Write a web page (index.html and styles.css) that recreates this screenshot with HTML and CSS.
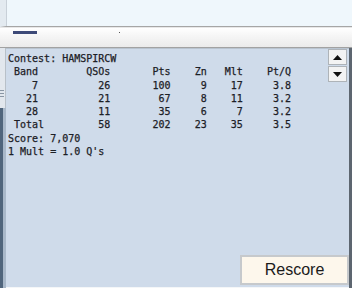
FILE: index.html
```html
<!DOCTYPE html>
<html>
<head>
<meta charset="utf-8">
<link rel="stylesheet" href="styles.css">
</head>
<body>
<div class="top"></div>
<div class="toolbar">
  <span class="sel"></span>
  <span class="dot"></span>
</div>
<div class="main">
  <div class="left-strip">
    <div class="grip-area"><span class="grip"></span></div>
    <div class="dark-edge"></div>
  </div>
  <div class="panel">
    <div class="row">
      <pre class="score">Contest: HAMSPIRCW
 Band        QSOs       Pts    Zn   Mlt    Pt/Q
    7          26       100     9    17     3.8
   21          21        67     8    11     3.2
   28          11        35     6     7     3.2
 Total         58       202    23    35     3.5
Score: 7,070
1 Mult = 1.0 Q's</pre>
      <div class="scroller">
        <div class="sbtn"><svg width="9" height="5" viewBox="0 0 9 5"><polygon points="0,5 9,5 4.5,0" fill="#111"/></svg></div>
        <div class="sbtn"><svg width="9" height="5" viewBox="0 0 9 5"><polygon points="0,0 9,0 4.5,5" fill="#111"/></svg></div>
      </div>
    </div>
    <div class="footer">
      <button class="rescore">Rescore</button>
    </div>
  </div>
  <div class="right-edge"></div>
</div>
</body>
</html>
```

FILE: styles.css
```css
html, body {
  margin: 0;
  padding: 0;
}
body {
  width: 352px;
  height: 288px;
  overflow: hidden;
  display: flex;
  flex-direction: column;
  background: #cfdbea;
  font-family: "DejaVu Sans Mono", monospace;
}
.top {
  height: 26px;
  flex: none;
  background: #eff7fc;
  border-left: 6px solid #e3eaf0;
  box-shadow: inset 1px 0 0 #c8d0d8;
  border-bottom: 1px solid #a6a6a6;
}
.toolbar {
  height: 19px;
  flex: none;
  position: relative;
  background: linear-gradient(#ffffff, #f6f6f6 40%, #ebebeb);
  border-top: 1px solid #e8e8e8;
  border-bottom: 1px solid #a2a2a2;
}
.sel {
  position: absolute;
  left: 13px;
  top: 3px;
  width: 24px;
  height: 3px;
  background: #3d4a78;
}
.dot {
  position: absolute;
  left: 119px;
  top: 4px;
  width: 1px;
  height: 1px;
  background: #555;
}
.main {
  flex: 1;
  display: flex;
  min-height: 0;
}
.left-strip {
  width: 6px;
  flex: none;
  display: flex;
  flex-direction: column;
  background: #e2e7ed;
}
.grip-area {
  height: 60px;
  flex: none;
  border-right: 1px solid #b8c0c8;
  position: relative;
}
.grip {
  position: absolute;
  left: 0;
  top: 42px;
  width: 4px;
  height: 9px;
  background: repeating-linear-gradient(#8a96a4 0 1px, transparent 1px 3px);
}
.dark-edge {
  flex: 1;
  border-left: 3px solid #50657c;
  background: #a9b8c9;
}
.panel {
  flex: 1;
  display: flex;
  flex-direction: column;
  background: #cfdbea;
  border-top: 1px solid #b9c4d0;
}
.row {
  display: flex;
  justify-content: space-between;
}
.score {
  margin: 3px 0 0 2px;
  font-family: "DejaVu Sans Mono", monospace;
  font-size: 10px;
  line-height: 13.3px;
  color: #1c2026;
  -webkit-text-stroke: 0.25px #1c2026;
}
.scroller {
  display: flex;
  flex-direction: column;
  gap: 1px;
  margin: 0 2px 0 0;
}
.sbtn {
  width: 17px;
  height: 14px;
  background: #f3f3f3;
  border: 1px solid #aeb3b8;
  display: flex;
  align-items: center;
  justify-content: center;
}
.footer {
  margin-top: auto;
  display: flex;
  justify-content: flex-end;
  padding-bottom: 2px;
  border-bottom: 1px solid #f4f6f8;
}
.rescore {
  width: 109px;
  height: 30px;
  background: #fdf7ec;
  border: 2px solid #c6c9cc;
  border-radius: 0;
  font-family: "Liberation Sans", Arial, sans-serif;
  font-size: 16px;
  color: #1a1a1a;
  padding: 0;
}
.right-edge {
  width: 3px;
  flex: none;
  background: #5d6670;
}
```
